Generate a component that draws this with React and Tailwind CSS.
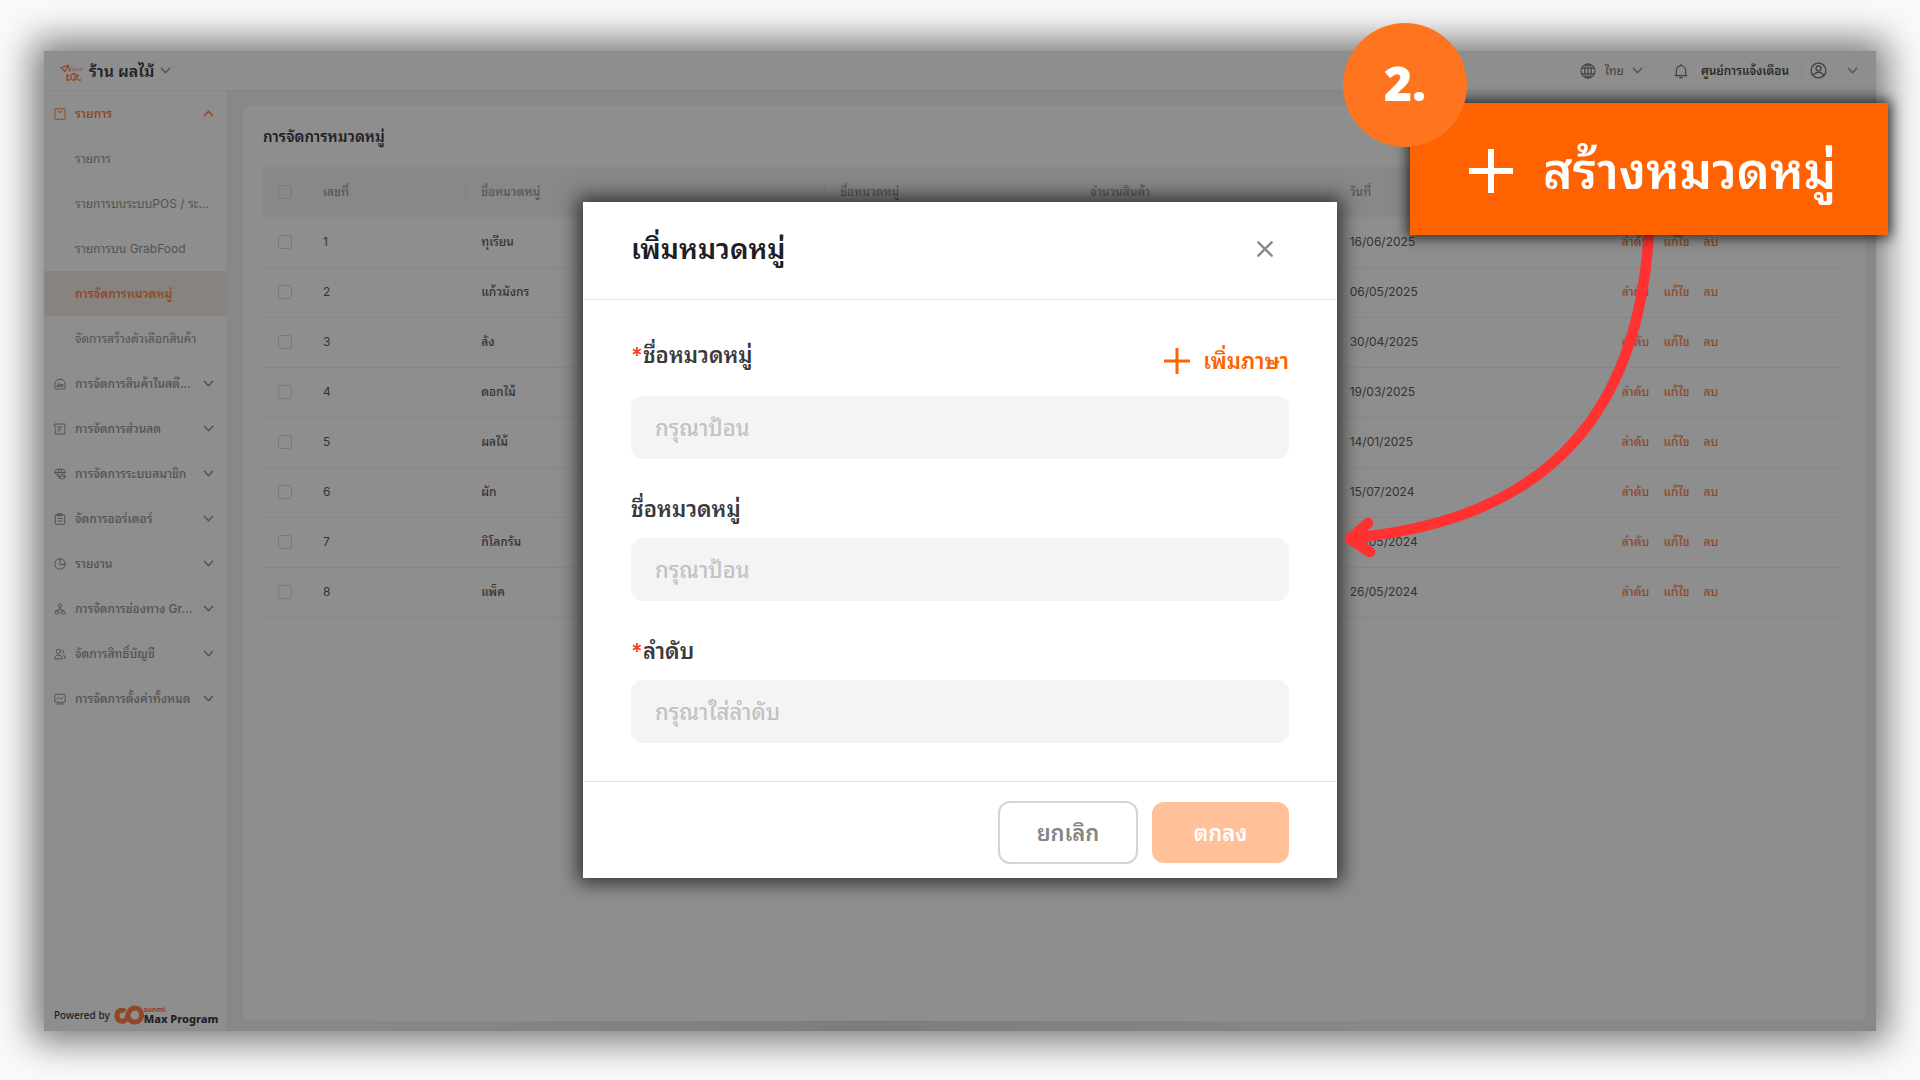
const FONT = 'font-["Inter","Noto_Sans_Thai_Looped","Noto_Sans_Thai",sans-serif]';

const Svg = ({ size = "size-3", children, box = 24, sw = 2 }) => (
  <svg
    className={`${size} shrink-0`}
    viewBox={`0 0 ${box} ${box}`}
    fill="none"
    stroke="currentColor"
    strokeWidth={sw}
    strokeLinecap="round"
    strokeLinejoin="round"
    aria-hidden="true"
  >
    {children}
  </svg>
);

const Chevron = ({ up }) => (
  <Svg size="size-[11px]" sw={3.2}>
    <path d={up ? "M3 17l9-10 9 10" : "M3 7l9 10 9-10"} />
  </Svg>
);

const icons = {
  list: (
    <>
      <rect x="2" y="1.500" width="20" height="21" rx="2" />
      <path d="M8 6l4 3.500L16 6" />
    </>
  ),
  stock: (
    <>
      <path d="M2 9.500C2 7 5 2.500 12 2.500S22 7 22 9.500V20a2 2 0 0 1-2 2H4a2 2 0 0 1-2-2z" />
      <path d="M7 12h4M7 17h4v-2H7zM14 17h4v-4h-4z" />
    </>
  ),
  discount: (
    <>
      <path d="M2 2h20v5c-2 1-2 3 0 4v2c-2 1-2 3 0 4v5H2v-5c2-1 2-3 0-4v-2c2-1 2-3 0-4z" />
      <path d="M8 8h8M8 12h6M8 16h3" />
    </>
  ),
  member: (
    <>
      <path d="M11 20L1.500 9 5 2.500h14L22.500 9M1.500 9h21M8 9l3 11M8 9l3-6.500M16 9l-3-6.500" />
      <circle cx="17.500" cy="17" r="5" />
      <path d="M17.500 14.500V17h2" />
    </>
  ),
  order: (
    <>
      <rect x="2.500" y="3.500" width="19" height="19" rx="2" />
      <path d="M8 1.500h8v4H8zM7.500 11h9M7.500 16h9" />
    </>
  ),
  report: (
    <>
      <circle cx="12" cy="12" r="10.500" />
      <path d="M12 2v11h9" />
    </>
  ),
  channel: (
    <>
      <circle cx="12" cy="5" r="3.500" />
      <path d="M12 8.500V13M6 16v-1.500l6-2 6 2V16" />
      <rect x="2" y="16" width="7.500" height="6" rx="2" />
      <rect x="14.500" y="16" width="7.500" height="6" rx="2" />
    </>
  ),
  account: (
    <>
      <circle cx="9" cy="7" r="4.500" />
      <path d="M1.500 21c0-5 3-6.500 7.500-6.500s7.500 1.500 7.500 6.500zM17 4a3.500 3.500 0 0 1 0 6.500M18.500 14c3 .5 4 2.500 4 6.500h-2" />
    </>
  ),
  settings: (
    <>
      <rect x="1.500" y="2.500" width="21" height="16" rx="3" />
      <path d="M6 12l3.500-3.500 4 4L18 8M5 22h14" />
    </>
  ),
};

const subItems = [
  "รายการ",
  "รายการบนระบบPOS / ระ...",
  "รายการบน GrabFood",
  "การจัดการหมวดหมู่",
  "จัดการสร้างตัวเลือกสินค้า",
];

const groups = [
  ["stock", "การจัดการสินค้าในสต๊..."],
  ["discount", "การจัดการส่วนลด"],
  ["member", "การจัดการระบบสมาชิก"],
  ["order", "จัดการออร์เดอร์"],
  ["report", "รายงาน"],
  ["channel", "การจัดการช่องทาง Gr..."],
  ["account", "จัดการสิทธิ์บัญชี"],
  ["settings", "การจัดการตั้งค่าทั้งหมด"],
];

const rows = [
  ["1", "ทุเรียน", "16/06/2025"],
  ["2", "แก้วมังกร", "06/05/2025"],
  ["3", "ลัง", "30/04/2025"],
  ["4", "ดอกไม้", "19/03/2025"],
  ["5", "ผลไม้", "14/01/2025"],
  ["6", "ผัก", "15/07/2024"],
  ["7", "กิโลกรัม", "26/05/2024"],
  ["8", "แพ็ค", "26/05/2024"],
];

const Tick = ({ label }) => (
  <input
    type="checkbox"
    aria-label={label}
    className="block size-[14px] appearance-none rounded-[3px] border border-[#7b7876]"
  />
);

function Header() {
  return (
    <header className="flex h-10 items-center border-b border-[#868686] pr-[18px] pl-4">
      <svg className="mt-1 h-[18px] w-[22px] overflow-visible" viewBox="0 0 22 18" aria-hidden="true">
        <path d="M1 3.500l7-2-3 6z" fill="none" stroke="#914728" strokeWidth="1.300" />
        <path d="M8 1.500l2 6" stroke="#914728" strokeWidth="1.200" />
        <text x="10" y="7" fontSize="5" fill="#7d5a4a" fontFamily="Inter">Gpos</text>
        <path d="M7 10v6h3M7 12h2M11 10v6M12 10h3v6h-3M17 10v6M17 12h2M18 16h3" fill="none" stroke="#914728" strokeWidth="1.300" />
      </svg>
      <button className="ml-[7px] flex items-center gap-[6px] text-[#1d1f25]">
        <span className="text-base leading-8 font-semibold whitespace-nowrap">ร้าน ผลไม้</span>
        <span className="text-[#555]"><Chevron /></span>
      </button>
      <div className="ml-auto flex items-center text-xs text-[#3f3f3f]">
        <button className="flex items-center">
          <Svg size="size-4" sw={1.600}>
            <circle cx="12" cy="12" r="10.500" />
            <ellipse cx="12" cy="12" rx="5" ry="10.500" />
            <path d="M12 1.500v21M2.500 8h19M2.500 16h19" />
          </Svg>
          <span className="mr-2 ml-[9px] leading-6">ไทย</span>
          <span className="text-[#555]"><Chevron /></span>
        </button>
        <button className="ml-[30px] flex items-center gap-3">
          <Svg size="size-4" sw={1.700}>
            <path d="M3 19h18M5 19V11a7 7 0 0 1 14 0v8M12 2v2M10 22h4" />
          </Svg>
          <span className="leading-6 font-medium whitespace-nowrap text-[#1d1d1d]">ศูนย์การแจ้งเตือน</span>
        </button>
        <span className="mr-2 ml-3 h-4 w-px bg-[#868686]" />
        <button aria-label="บัญชี" className="flex items-center gap-5">
          <Svg size="size-[17px]" sw={1.800}>
            <circle cx="12" cy="12" r="10.500" />
            <circle cx="12" cy="9" r="3.500" />
            <path d="M5 19c1-3.500 3.500-4.500 7-4.500s6 1 7 4.500" />
          </Svg>
          <span className="text-[#555]"><Chevron /></span>
        </button>
      </div>
    </header>
  );
}

function Sidebar() {
  return (
    <nav className="flex w-[184px] shrink-0 flex-col border-r border-[#868686] text-xs text-[#525252]">
      <button className="flex h-[45px] items-center pr-[13px] pl-[10px] font-semibold text-[#914728]">
        <Svg>{icons.list}</Svg>
        <span className="ml-[9px] flex-1 text-left leading-6">รายการ</span>
        <Chevron up />
      </button>
      {subItems.map((t, i) => (
        <a
          key={t}
          href="#"
          className={
            i === 3
              ? "flex h-[45px] items-center bg-[#89837f] pl-[31px] font-semibold text-[#914728]"
              : "flex h-[45px] items-center pl-[31px]"
          }
        >
          <span className="leading-6 whitespace-nowrap">{t}</span>
        </a>
      ))}
      {groups.map(([k, t]) => (
        <button key={k} className="flex h-[45px] items-center pr-[13px] pl-[10px] font-medium">
          <Svg>{icons[k]}</Svg>
          <span className="ml-[9px] flex-1 text-left leading-6 whitespace-nowrap">{t}</span>
          <Chevron />
        </button>
      ))}
      <div className="mt-auto flex items-center pb-[6px] pl-[10px] text-[#1d1f25]">
        <span className='font-["Noto_Sans"] text-[10px] leading-4 font-medium whitespace-nowrap'>Powered by</span>
        <svg className="ml-1 h-[20px] w-[30px] shrink-0" viewBox="0 0 30 20" fill="none" stroke="#914728" strokeWidth="5" aria-hidden="true">
          <path d="M11 6.500C9 4.500 3 4.500 3 10.500S8 16.500 10 16c4-1 3-5 5-9 1.200-2.500 3-4 6-4 4 0 6.500 3 6.500 7s-2.500 7-6.500 7-6.500-2.500-6.500-6" />
        </svg>
        <span className='flex flex-col font-["Noto_Sans"] font-extrabold'>
          <span className="text-[7px] leading-[7px] text-[#914728]">sunmi</span>
          <span className="text-[11px] leading-3 whitespace-nowrap">Max Program</span>
        </span>
      </div>
    </nav>
  );
}

function CategoryTable() {
  const th = "relative h-[50px] px-4 text-left font-medium";
  const bar = "absolute top-4 left-0 h-4 w-px bg-[#828282]";
  return (
    <table className="mt-4 w-full table-fixed border-collapse text-xs leading-6 text-[#333]">
      <colgroup>
        <col className="w-11" />
        <col className="w-[10%]" />
        <col className="w-[22.7%]" />
        <col className="w-[15.8%]" />
        <col className="w-[16.4%]" />
        <col className="w-[17.2%]" />
        <col />
      </colgroup>
      <thead className="bg-[#888] text-[#565656]">
        <tr>
          <th className="h-[50px] pl-[15px]"><Tick label="เลือกทั้งหมด" /></th>
          <th className={th}>เลขที่</th>
          <th className={th}><span className={bar} />ชื่อหมวดหมู่</th>
          <th className={th}><span className={bar} />ชื่อหมวดหมู่</th>
          <th className={th}><span className={bar} />จำนวนสินค้า</th>
          <th className={th}>วันที่</th>
          <th className={th} aria-label="การดำเนินการ" />
        </tr>
      </thead>
      <tbody>
        {rows.map(([n, name, date]) => (
          <tr key={n} className="h-[50px] border-b border-[#878787]">
            <td className="pl-[15px]"><Tick label={name} /></td>
            <td className="px-4">{n}</td>
            <td className="px-4 font-medium">{name}</td>
            <td />
            <td />
            <td className="px-4">{date}</td>
            <td className="px-4 font-medium text-[#914728]">
              <div className="flex gap-[14px]">
                <a href="#">ลำดับ</a>
                <a href="#">แก้ไข</a>
                <a href="#">ลบ</a>
              </div>
            </td>
          </tr>
        ))}
      </tbody>
    </table>
  );
}

function Field({ id, label, required, placeholder, action }) {
  return (
    <div className="flex flex-col">
      <div className="flex items-start justify-between">
        <label htmlFor={id} className="text-[22px] leading-10 font-semibold text-[#3a3a3a]">
          {required && <span className="text-[#ff3b1f]">*</span>}
          {label}
        </label>
        {action}
      </div>
      <input
        id={id}
        type="text"
        placeholder={placeholder}
        className="mt-[9px] h-[63px] w-full rounded-xl bg-[#f4f4f4] px-6 text-[22px] font-medium placeholder:text-[#c2c2c2]"
      />
    </div>
  );
}

function Modal() {
  return (
    <div
      role="dialog"
      aria-labelledby="dlg-title"
      className="flex w-[754px] flex-col bg-white shadow-[0_0_18px_5px_rgba(0,0,0,0.65)]"
    >
      <div className="flex h-[98px] items-center justify-between border-b border-[#e6e6e6] px-12 pb-1">
        <h2 id="dlg-title" className="text-[28px] leading-[48px] font-semibold text-[#1d1f25]">เพิ่มหมวดหมู่</h2>
        <button aria-label="ปิด" className="mr-4 text-[#8a8a8a]">
          <Svg size="size-4" sw={3.600}>
            <path d="M2 2l20 20M22 2L2 22" />
          </Svg>
        </button>
      </div>
      <div className="flex flex-col gap-[30px] px-12 pt-[35px] pb-[38px]">
        <Field
          id="name1"
          label="ชื่อหมวดหมู่"
          required
          placeholder="กรุณาป้อน"
          action={
            <button className="flex h-[52px] items-center gap-[13px] text-[22px] leading-10 font-semibold text-[#ff6200]">
              <Svg size="size-[26px]" sw={3} box={26}>
                <path d="M13 0v26M0 13h26" strokeLinecap="butt" />
              </Svg>
              เพิ่มภาษา
            </button>
          }
        />
        <Field id="name2" label="ชื่อหมวดหมู่" placeholder="กรุณาป้อน" />
        <Field id="order" label="ลำดับ" required placeholder="กรุณาใส่ลำดับ" />
      </div>
      <div className="flex items-center justify-end gap-[14px] border-t border-[#e2e2e2] px-12 pt-[19px] pb-[14px] text-[22px] font-semibold">
        <button className="h-[63px] w-[140px] rounded-xl border-2 border-[#d6d4d3] pt-[2px] text-[#858585]">ยกเลิก</button>
        <button className="h-[61px] w-[137px] rounded-xl bg-[#ffc09a] pt-[2px] text-white">ตกลง</button>
      </div>
    </div>
  );
}

export default function App() {
  return (
    <div className={`${FONT} relative flex min-h-screen flex-col overflow-hidden bg-[#fafafa] px-11 pt-[51px] pb-[49px]`}>
      <div className="flex flex-1 flex-col bg-[#8e8e8e] shadow-[0_0_34px_11px_rgba(0,0,0,0.52)]">
        <Header />
        <div className="flex flex-1">
          <Sidebar />
          <div className="flex min-w-0 flex-1 flex-col bg-[#888] pt-[15px] pr-[11px] pl-[15px]">
            <main className="flex-1 rounded-md bg-[#8e8e8e] px-5 pt-[17px]">
              <h1 className="text-[15px] leading-7 font-semibold text-[#1d1f25]">การจัดการหมวดหมู่</h1>
              <CategoryTable />
            </main>
            <div className="mr-[500px] ml-[130px] h-[10px] bg-gradient-to-r from-[#888] via-[#7e7c7b] to-[#888]" />
          </div>
        </div>
      </div>

      <div className="absolute inset-0 flex items-center justify-center">
        <Modal />
      </div>

      <svg className="absolute top-[225px] right-[260px] h-[345px] w-[320px]" viewBox="1340 225 320 345" fill="none" stroke="#ff3131" strokeWidth="10.500" strokeLinecap="round" strokeLinejoin="round" aria-hidden="true">
        <path d="M1649 230C1640 400 1560 520 1350 538" />
        <path d="M1368 523L1350 539L1370 552" />
      </svg>

      <div className="absolute top-[103px] right-8 flex h-[132px] w-[478px] items-center bg-[#ff6200] pt-1 pl-[58px] text-white shadow-[0_0_12px_3px_rgba(0,0,0,0.7)]">
        <Svg size="size-[46px]" box={46} sw={6}>
          <path d="M23 1v44M1 23h44" strokeLinecap="butt" />
        </Svg>
        <span className="ml-[29px] text-[50px] leading-[80px] font-semibold whitespace-nowrap">สร้างหมวดหมู่</span>
      </div>
      <div className='absolute top-[23px] right-[453px] flex size-[124px] items-center justify-center rounded-full bg-[#ff751f] pb-1 font-["Open_Sans"] text-5xl font-extrabold text-white'>
        2.
      </div>
    </div>
  );
}
